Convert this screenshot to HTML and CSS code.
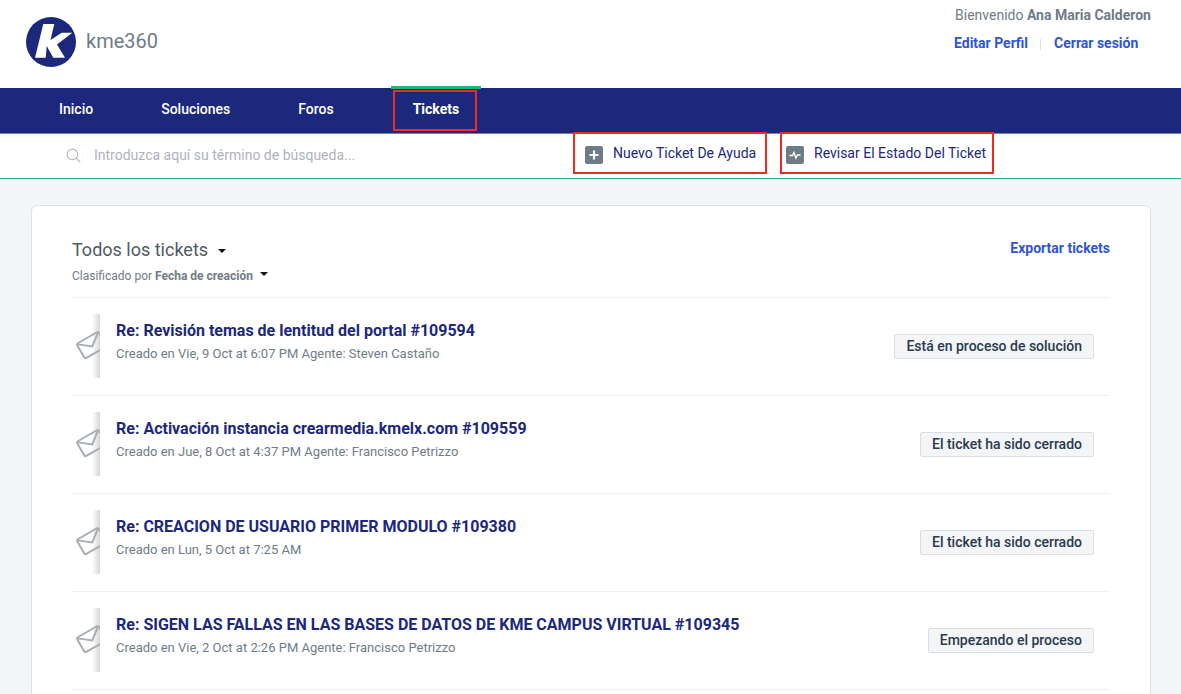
FILE: index.html
```html
<!DOCTYPE html>
<html lang="es">
<head>
    <meta charset="UTF-8">
    <title>Tickets</title>
    <link rel="stylesheet" href="styles.css">
</head>
<body>
    <header class="top">
        <div class="brand">
            <svg class="logo" viewBox="0 0 50 50">
                <circle cx="25" cy="25" r="25" fill="#1b287c"/>
                <path fill="#fff" d="M17.3 7H28.3L24.5 23L35.7 15.7H46.3L31 27.5L39 40.7H27.3L20.7 29L19.7 40.7H9Z"/>
            </svg>
            <span class="brand-name">kme360</span>
        </div>
        <div class="user">
            <div class="welcome">Bienvenido <b>Ana Maria Calderon</b></div>
            <div class="user-links">
                <a href="#">Editar Perfil</a>
                <span class="sep"></span>
                <a href="#">Cerrar sesión</a>
            </div>
        </div>
    </header>

    <nav class="nav">
        <a class="tab" href="#">Inicio</a>
        <a class="tab" href="#">Soluciones</a>
        <a class="tab" href="#">Foros</a>
        <a class="tab active" href="#">Tickets</a>
    </nav>

    <div class="searchbar">
        <div class="search">
            <svg class="search-icon" viewBox="0 0 16 16" fill="none" stroke="#b3b8bd" stroke-width="1.2">
                <circle cx="6.8" cy="6.8" r="5.6"/>
                <path d="M11 11L15.2 15.2"/>
            </svg>
            <span>Introduzca aquí su término de búsqueda...</span>
        </div>
        <a class="action action-new" href="#">
            <svg class="action-icon" viewBox="0 0 18 18">
                <rect width="18" height="18" rx="2" fill="#6f7c87"/>
                <path d="M9 4.5V13.5M4.5 9H13.5" stroke="#fff" stroke-width="2.2"/>
            </svg>
            Nuevo Ticket De Ayuda
        </a>
        <a class="action action-status" href="#">
            <svg class="action-icon" viewBox="0 0 18 18">
                <rect width="18" height="18" rx="2" fill="#6f7c87"/>
                <path d="M3.5 9.5H6.5L8 6.5L10 12L11.5 9H14.5" fill="none" stroke="#fff" stroke-width="1.4"/>
            </svg>
            Revisar El Estado Del Ticket
        </a>
    </div>

    <main class="content">
        <section class="card">
            <div class="card-head">
                <div>
                    <h1 class="card-title">Todos los tickets <i class="caret"></i></h1>
                    <div class="sorted">Clasificado por <b>Fecha de creación</b> <i class="caret"></i></div>
                </div>
                <a class="export" href="#">Exportar tickets</a>
            </div>

            <div class="ticket">
                <div class="ticket-icon">
                    <svg viewBox="0 0 28 64" width="28" height="64" fill="none" stroke="#a7adb2" stroke-width="2">
                        <g transform="translate(4.5 30) rotate(-30)">
                            <rect width="25" height="17" rx="2"/>
                            <path d="M1 1L12.5 10L24 1"/>
                        </g>
                    </svg>
                </div>
                <div class="ticket-main">
                    <a class="ticket-title" href="#">Re: Revisión temas de lentitud del portal #109594</a>
                    <div class="ticket-meta">Creado en Vie, 9 Oct at 6:07 PM Agente: Steven Castaño</div>
                </div>
                <span class="status">Está en proceso de solución</span>
            </div>

            <div class="ticket">
                <div class="ticket-icon">
                    <svg viewBox="0 0 28 64" width="28" height="64" fill="none" stroke="#a7adb2" stroke-width="2">
                        <g transform="translate(4.5 30) rotate(-30)">
                            <rect width="25" height="17" rx="2"/>
                            <path d="M1 1L12.5 10L24 1"/>
                        </g>
                    </svg>
                </div>
                <div class="ticket-main">
                    <a class="ticket-title" href="#">Re: Activación instancia crearmedia.kmelx.com #109559</a>
                    <div class="ticket-meta">Creado en Jue, 8 Oct at 4:37 PM Agente: Francisco Petrizzo</div>
                </div>
                <span class="status">El ticket ha sido cerrado</span>
            </div>

            <div class="ticket">
                <div class="ticket-icon">
                    <svg viewBox="0 0 28 64" width="28" height="64" fill="none" stroke="#a7adb2" stroke-width="2">
                        <g transform="translate(4.5 30) rotate(-30)">
                            <rect width="25" height="17" rx="2"/>
                            <path d="M1 1L12.5 10L24 1"/>
                        </g>
                    </svg>
                </div>
                <div class="ticket-main">
                    <a class="ticket-title" href="#">Re: CREACION DE USUARIO PRIMER MODULO #109380</a>
                    <div class="ticket-meta">Creado en Lun, 5 Oct at 7:25 AM</div>
                </div>
                <span class="status">El ticket ha sido cerrado</span>
            </div>

            <div class="ticket">
                <div class="ticket-icon">
                    <svg viewBox="0 0 28 64" width="28" height="64" fill="none" stroke="#a7adb2" stroke-width="2">
                        <g transform="translate(4.5 30) rotate(-30)">
                            <rect width="25" height="17" rx="2"/>
                            <path d="M1 1L12.5 10L24 1"/>
                        </g>
                    </svg>
                </div>
                <div class="ticket-main">
                    <a class="ticket-title" href="#">Re: SIGEN LAS FALLAS EN LAS BASES DE DATOS DE KME CAMPUS VIRTUAL #109345</a>
                    <div class="ticket-meta">Creado en Vie, 2 Oct at 2:26 PM Agente: Francisco Petrizzo</div>
                </div>
                <span class="status">Empezando el proceso</span>
            </div>
        </section>
    </main>
</body>
</html>
```

FILE: styles.css
```css
* {
    margin: 0;
    padding: 0;
    box-sizing: border-box;
}
html, body {
    height: 694px;
    overflow: hidden;
}
body {
    font-family: Roboto, "Liberation Sans", sans-serif;
    font-size: 14px;
    color: #6f7c87;
    background-color: #f3f5f7;
}
a {
    text-decoration: none;
}

/* header */
.top {
    display: flex;
    justify-content: space-between;
    height: 88px;
    padding: 0 30px 0 26px;
    background-color: #fff;
}
.brand {
    display: flex;
    align-items: center;
    height: 84px;
}
.logo {
    width: 50px;
    height: 50px;
    margin-right: 10px;
}
.brand-name {
    margin-bottom: 2px;
    font-size: 20px;
    color: #6f7c87;
}
.user {
    width: 197px;
    padding-top: 7px;
}
.welcome {
    height: 17px;
    padding-left: 1px;
    line-height: 17px;
    white-space: nowrap;
}
.welcome b {
    font-weight: 700;
}
.user-links {
    display: flex;
    align-items: center;
    margin-top: 11px;
    font-weight: 700;
}
.user-links a {
    color: #2f55d4;
}
.sep {
    width: 1px;
    height: 11px;
    margin: 2px 13px 0 12px;
    background-color: #dadfe3;
}

/* nav */
.nav {
    display: flex;
    height: 46px;
    padding-left: 37px;
    background-color: #1b287c;
    border-bottom: 1px solid #18b77e;
}
.tab {
    position: relative;
    display: block;
    padding: 0 22px;
    margin-right: 24px;
    line-height: 42px;
    font-weight: 500;
    color: #fff;
}
.tab.active {
    margin-left: 11px;
    font-weight: 700;
}
.tab.active::before {
    content: "";
    position: absolute;
    top: -2px;
    left: 0;
    right: 0;
    height: 3px;
    background-color: #18b77e;
}
.tab.active::after {
    content: "";
    position: absolute;
    top: 2px;
    bottom: 2px;
    left: 2px;
    right: 4px;
    border: 2px solid #f02b26;
}

/* search row */
.searchbar {
    display: flex;
    align-items: flex-start;
    height: 45px;
    padding-left: 66px;
    background-color: #fff;
    border-bottom: 1px solid #18b77e;
}
.search {
    display: flex;
    align-items: center;
    width: 507px;
    height: 42px;
    color: #aeb4b9;
}
.search-icon {
    width: 15px;
    height: 15px;
    margin-right: 13px;
}
.action {
    display: flex;
    align-items: center;
    height: 42px;
    margin-top: -2px;
    border: 2px solid #f02b26;
    color: #1b287c;
    white-space: nowrap;
}
.action-new {
    width: 194px;
    padding-left: 10px;
    margin-right: 13px;
}
.action-status {
    width: 214px;
    padding-left: 4px;
}
.action-icon {
    width: 18px;
    height: 18px;
    margin: 4px 10px 0 0;
    flex-shrink: 0;
}

/* card */
.content {
    padding: 26px 30px 0 31px;
}
.card {
    padding: 0 40px 40px;
    background-color: #fff;
    border: 1px solid #dde1e6;
    border-radius: 6px;
}
.card-head {
    display: flex;
    justify-content: space-between;
    height: 92px;
    padding-top: 32px;
    border-bottom: 1px solid #eff1f3;
}
.card-title {
    font-size: 18px;
    font-weight: 400;
    line-height: 24px;
    color: #4f5a63;
}
.sorted {
    margin-top: 6px;
    font-size: 12px;
    line-height: 16px;
}
.sorted b {
    font-weight: 700;
}
.sorted .caret {
    margin-left: 4px;
    vertical-align: 4px;
}
.caret {
    display: inline-block;
    width: 0;
    height: 0;
    margin-left: 5px;
    vertical-align: 3px;
    border-left: 4px solid transparent;
    border-right: 4px solid transparent;
    border-top: 4px solid #111;
}
.export {
    font-weight: 700;
    color: #2f55d4;
    line-height: 20px;
}

/* ticket rows */
.ticket {
    display: flex;
    align-items: center;
    height: 98px;
    padding: 0 16px 0 0;
    border-bottom: 1px solid #eff1f3;
}
.ticket-icon {
    width: 28px;
    height: 64px;
    margin-right: 16px;
    margin-bottom: 2px;
    overflow: hidden;
    flex-shrink: 0;
    background: linear-gradient(to right, #fff 72%, #d4d6d8 100%);
}
.ticket-icon svg {
    display: block;
}
.ticket-main {
    flex: 1;
    padding-bottom: 10px;
}
.ticket-title {
    display: block;
    font-size: 16px;
    font-weight: 700;
    line-height: 22px;
    color: #1b287c;
}
.ticket-meta {
    margin-top: 3px;
    font-size: 13px;
    line-height: 18px;
}
.status {
    padding: 0 11px;
    height: 25px;
    line-height: 23px;
    font-size: 14px;
    font-weight: 500;
    color: #2a3a4d;
    background-color: #f3f5f7;
    border: 1px solid #dadfe3;
    border-radius: 2px;
    white-space: nowrap;
}
```
